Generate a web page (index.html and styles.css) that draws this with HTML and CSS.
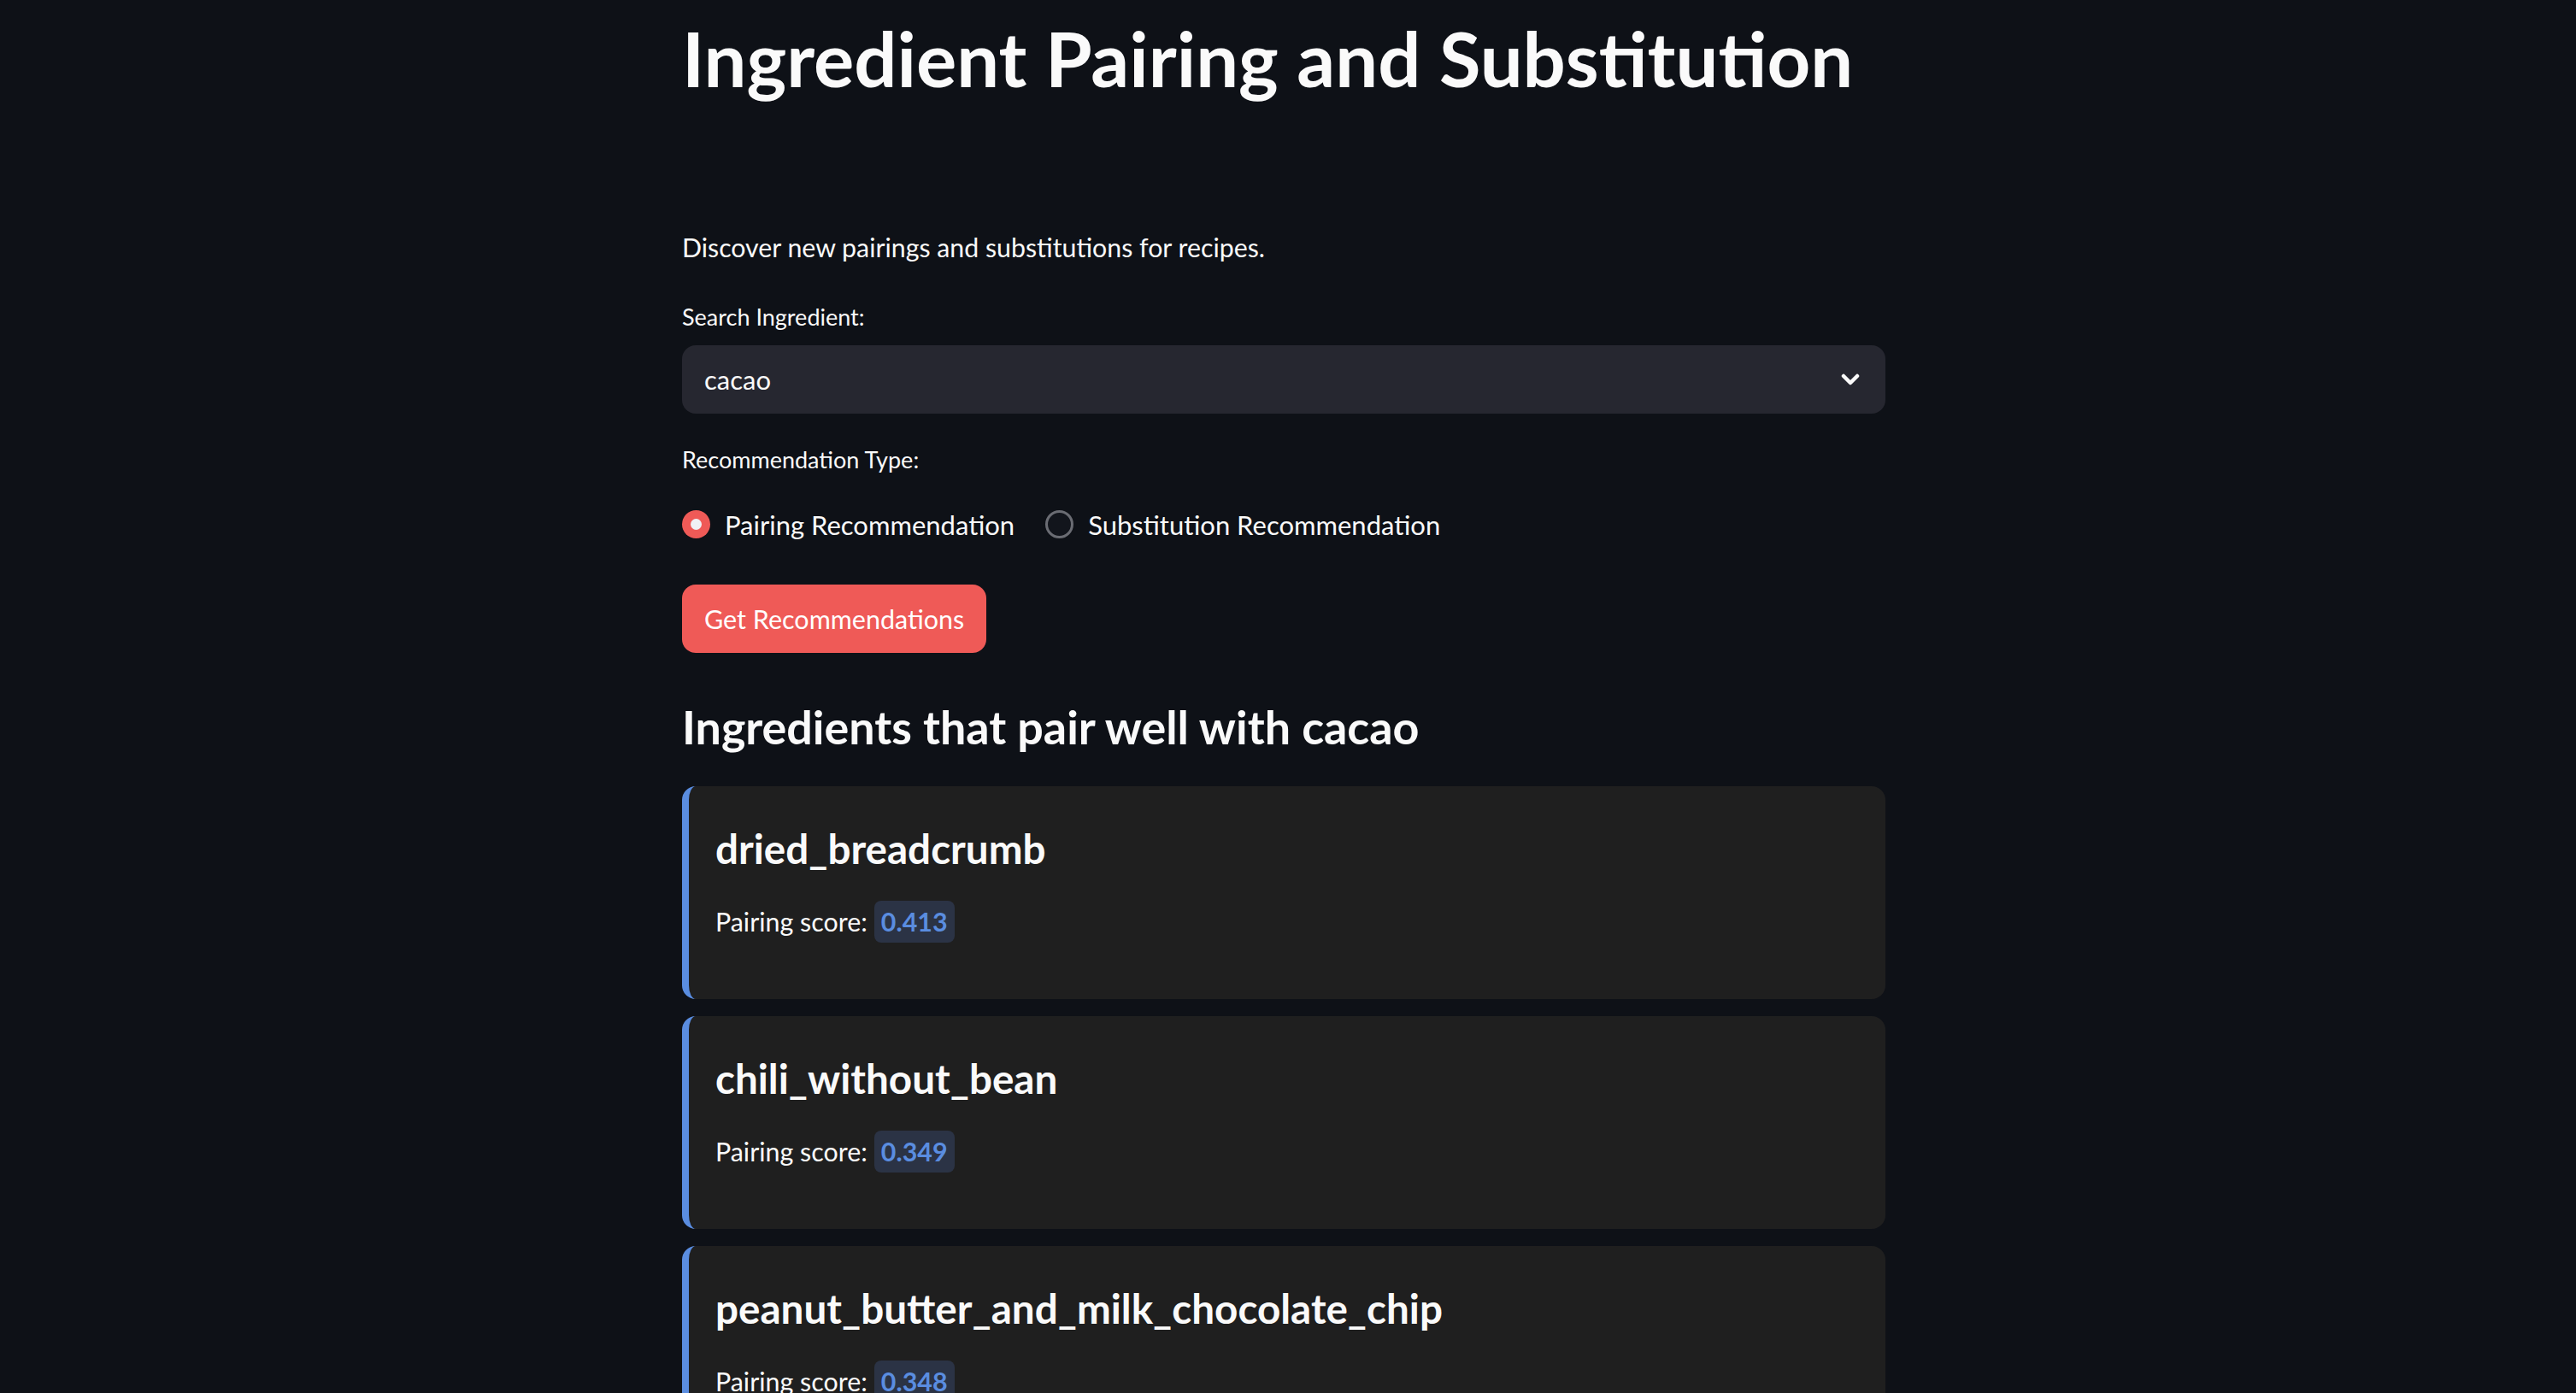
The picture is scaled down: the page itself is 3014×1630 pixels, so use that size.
FILE: index.html
```html
<!DOCTYPE html>
<html lang="en">
<head>
<meta charset="utf-8">
<title>Ingredient Pairing and Substitution</title>
<link rel="stylesheet" href="styles.css">
</head>
<body>
<main class="page">
  <div class="block">
    <h1 class="title">Ingredient Pairing and Substitution</h1>
    <p class="intro">Discover new pairings and substitutions for recipes.</p>

    <label class="label label-search">Search Ingredient:</label>
    <div class="select">
      <span class="select-value">cacao</span>
      <svg class="chevron" width="22" height="14" viewBox="0 0 22 14" aria-hidden="true">
        <path d="M3 3 L11 11 L19 3" fill="none" stroke="#fafafa" stroke-width="4.5" stroke-linecap="round" stroke-linejoin="round"/>
      </svg>
    </div>

    <label class="label label-type">Recommendation Type:</label>
    <div class="radios">
      <div class="radio">
        <span class="dot dot-on"><span class="dot-inner"></span></span>
        <span class="radio-text">Pairing Recommendation</span>
      </div>
      <div class="radio">
        <span class="dot dot-off"></span>
        <span class="radio-text">Substitution Recommendation</span>
      </div>
    </div>

    <button class="btn">Get Recommendations</button>

    <h3 class="subtitle">Ingredients that pair well with cacao</h3>

    <div class="cards">
      <div class="card">
        <h4 class="card-title">dried_breadcrumb</h4>
        <div class="score"><span class="score-label">Pairing score:</span><span class="badge">0.413</span></div>
      </div>
      <div class="card">
        <h4 class="card-title">chili_without_bean</h4>
        <div class="score"><span class="score-label">Pairing score:</span><span class="badge">0.349</span></div>
      </div>
      <div class="card">
        <h4 class="card-title">peanut_butter_and_milk_chocolate_chip</h4>
        <div class="score"><span class="score-label">Pairing score:</span><span class="badge">0.348</span></div>
      </div>
    </div>
  </div>
</main>
</body>
</html>
```

FILE: styles.css
```css
* { box-sizing: border-box; }

html, body {
  margin: 0;
  padding: 0;
  height: 100%;
  overflow: hidden;
  background: #0e1117;
}

body {
  color: #fafafa;
  font-family: "Lato", "Noto Sans", sans-serif;
}

.page {
  display: flex;
  justify-content: center;
  padding-right: 10px;
}

.block {
  width: 1408px;
  padding-top: 16px;
  display: flex;
  flex-direction: column;
  align-items: flex-start;
}

.title {
  margin: 0;
  font-size: 88.5px;
  line-height: 105.6px;
  font-weight: 700;
}

.intro {
  margin: 142px 0 0 0;
  font-size: 30.3px;
  line-height: 51px;
}

.label {
  display: block;
  font-size: 27px;
  line-height: 42px;
}

.label-search { margin-top: 35px; }

.select {
  margin-top: 12px;
  width: 100%;
  height: 80px;
  background: #262730;
  border-radius: 16px;
  display: flex;
  align-items: center;
  justify-content: space-between;
  padding: 0 30px 0 26px;
}

.select-value {
  font-size: 31px;
}

.chevron { display: block; }

.label-type { margin-top: 33px; }

.radios {
  margin-top: 31px;
  display: flex;
  align-items: center;
  gap: 36px;
  height: 48px;
}

.radio {
  display: flex;
  align-items: center;
  gap: 17px;
}

.dot {
  width: 33px;
  height: 33px;
  border-radius: 50%;
  display: flex;
  align-items: center;
  justify-content: center;
}

.dot-on { background: #ef5a57; }

.dot-inner {
  width: 13px;
  height: 13px;
  border-radius: 50%;
  background: #f0f2f6;
}

.dot-off {
  border: 3px solid #6a6c73;
  background: #12151c;
}

.radio-text {
  font-size: 31px;
  line-height: 48px;
}

.btn {
  margin-top: 46px;
  height: 80px;
  padding: 0 26px;
  border: none;
  border-radius: 16px;
  background: #ef5a57;
  color: #ffffff;
  font-family: inherit;
  font-size: 30.5px;
}

.subtitle {
  margin: 53px 0 0 0;
  font-size: 53.8px;
  line-height: 67px;
  font-weight: 700;
}

.cards {
  margin-top: 36px;
  width: 100%;
  display: flex;
  flex-direction: column;
  gap: 20px;
}

.card {
  width: 100%;
  background: #1f1f1f;
  border-left: 8px solid #5a8de0;
  border-radius: 16px;
  padding: 49px 32px 66px 31px;
}

.card-title {
  margin: 0;
  font-size: 47.6px;
  line-height: 48px;
  font-weight: 700;
}

.score {
  margin-top: 37px;
  display: flex;
  align-items: center;
  gap: 8px;
  height: 49px;
}

.score-label {
  font-size: 30.4px;
  line-height: 49px;
}

.badge {
  height: 49px;
  line-height: 49px;
  padding: 0 8px;
  border-radius: 8px;
  background: #2b3345;
  color: #5a8de0;
  font-size: 30.4px;
  font-weight: 700;
}
```
